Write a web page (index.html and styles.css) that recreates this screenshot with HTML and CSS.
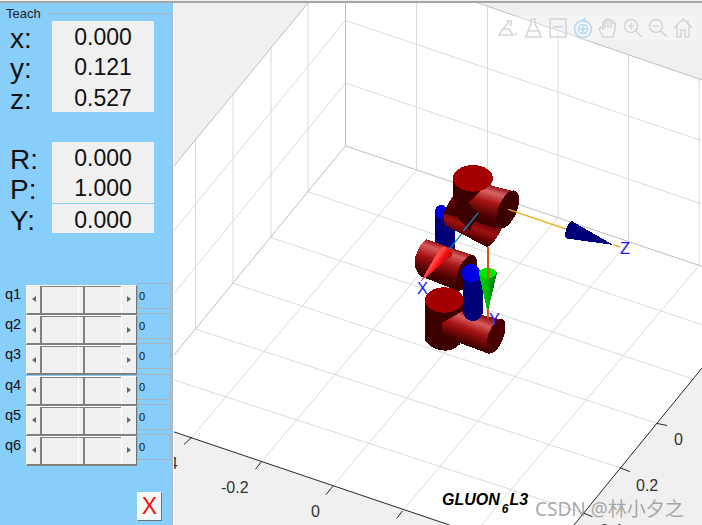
FILE: index.html
```html
<!DOCTYPE html>
<html lang="en">
<head>
<meta charset="utf-8">
<title>Teach</title>
<link rel="stylesheet" href="styles.css">
</head>
<body>
<div class="window">
  <aside class="panel">
    <fieldset class="group">
      <legend class="legend">Teach</legend>
      <div class="readouts">
        <div class="readout"><span class="axis">x:</span><span class="value">0.000</span></div>
        <div class="readout"><span class="axis">y:</span><span class="value">0.121</span></div>
        <div class="readout"><span class="axis">z:</span><span class="value">0.527</span></div>
      </div>
      <div class="readouts second">
        <div class="readout"><span class="axis">R:</span><span class="value">0.000</span></div>
        <div class="readout"><span class="axis">P:</span><span class="value">1.000</span></div>
        <div class="readout divided"><span class="axis">Y:</span><span class="value">0.000</span></div>
      </div>
      <div class="joints">
        <div class="joint"><span class="joint-name">q1</span><div class="scroll"><span class="sbtn"><i class="arrow-left"></i></span><span class="track"></span><span class="thumb"></span><span class="track"></span><span class="sbtn"><i class="arrow-right"></i></span></div><span class="joint-value">0</span></div>
        <div class="joint"><span class="joint-name">q2</span><div class="scroll"><span class="sbtn"><i class="arrow-left"></i></span><span class="track"></span><span class="thumb"></span><span class="track"></span><span class="sbtn"><i class="arrow-right"></i></span></div><span class="joint-value">0</span></div>
        <div class="joint"><span class="joint-name">q3</span><div class="scroll"><span class="sbtn"><i class="arrow-left"></i></span><span class="track"></span><span class="thumb"></span><span class="track"></span><span class="sbtn"><i class="arrow-right"></i></span></div><span class="joint-value">0</span></div>
        <div class="joint"><span class="joint-name">q4</span><div class="scroll"><span class="sbtn"><i class="arrow-left"></i></span><span class="track"></span><span class="thumb"></span><span class="track"></span><span class="sbtn"><i class="arrow-right"></i></span></div><span class="joint-value">0</span></div>
        <div class="joint"><span class="joint-name">q5</span><div class="scroll"><span class="sbtn"><i class="arrow-left"></i></span><span class="track"></span><span class="thumb"></span><span class="track"></span><span class="sbtn"><i class="arrow-right"></i></span></div><span class="joint-value">0</span></div>
        <div class="joint"><span class="joint-name">q6</span><div class="scroll"><span class="sbtn"><i class="arrow-left"></i></span><span class="track"></span><span class="thumb"></span><span class="track"></span><span class="sbtn"><i class="arrow-right"></i></span></div><span class="joint-value">0</span></div>
      </div>
      <div class="close-row"><button class="close" type="button">X</button></div>
    </fieldset>
  </aside>
  <main class="plot">
    <svg class="chart" viewBox="174 3 528 522" width="528" height="522" xmlns="http://www.w3.org/2000/svg">
      <defs>
        <linearGradient id="cylTop" gradientUnits="userSpaceOnUse" x1="306" y1="108" x2="268" y2="238">
          <stop offset="0" stop-color="#7a0000"/><stop offset=".2" stop-color="#da6464"/><stop offset=".42" stop-color="#a81414"/><stop offset=".75" stop-color="#480000"/><stop offset="1" stop-color="#300000"/>
        </linearGradient>
        <linearGradient id="cylBack" gradientUnits="userSpaceOnUse" x1="215" y1="195" x2="190" y2="270">
          <stop offset="0" stop-color="#500000"/><stop offset=".45" stop-color="#a01010"/><stop offset=".75" stop-color="#600000"/><stop offset="1" stop-color="#300000"/>
        </linearGradient>
        <linearGradient id="cylMid" gradientUnits="userSpaceOnUse" x1="92" y1="268" x2="52" y2="385">
          <stop offset="0" stop-color="#8a0808"/><stop offset=".18" stop-color="#d85c5c"/><stop offset=".42" stop-color="#a81414"/><stop offset=".75" stop-color="#500000"/><stop offset="1" stop-color="#300000"/>
        </linearGradient>
        <linearGradient id="cylLow" gradientUnits="userSpaceOnUse" x1="205" y1="480" x2="165" y2="590">
          <stop offset="0" stop-color="#8a0808"/><stop offset=".22" stop-color="#d85c5c"/><stop offset=".45" stop-color="#a81414"/><stop offset=".8" stop-color="#480000"/><stop offset="1" stop-color="#300000"/>
        </linearGradient>
        <linearGradient id="coneRed" gradientUnits="userSpaceOnUse" x1="100" y1="300" x2="150" y2="335">
          <stop offset="0" stop-color="#e01010"/><stop offset=".35" stop-color="#ff5050"/><stop offset=".6" stop-color="#f01010"/><stop offset="1" stop-color="#a00000"/>
        </linearGradient>
        <linearGradient id="coneGreen" gradientUnits="userSpaceOnUse" x1="238" y1="0" x2="290" y2="0">
          <stop offset="0" stop-color="#00d000"/><stop offset=".4" stop-color="#00c000"/><stop offset="1" stop-color="#006800"/>
        </linearGradient>
      </defs>

      <polygon class="wall-fill" points="174,3 308,3 174,166"/>
      <polygon class="wall-fill" points="478,3 702,3 702,80"/>
      <polygon class="wall-fill" points="174,432 450,525 174,525"/>
      <polygon class="wall-fill" points="702,368 574,525 702,525"/>

      <g class="grid">
        <line x1="308" y1="3" x2="308" y2="192"/>
        <line x1="271" y1="49" x2="271" y2="237"/>
        <line x1="233" y1="95" x2="233" y2="283"/>
        <line x1="195.5" y1="139" x2="195.5" y2="329"/>
        <line x1="416.5" y1="3" x2="416.5" y2="170"/>
        <line x1="487.5" y1="6" x2="487.5" y2="194"/>
        <line x1="558" y1="30" x2="558" y2="218"/>
        <line x1="628.5" y1="55" x2="628.5" y2="242"/>
        <line x1="699" y1="79" x2="699" y2="265"/>
        <line x1="345.4" y1="20.4" x2="174" y2="230.7"/>
        <line x1="345.4" y1="83.1" x2="174" y2="293.5"/>
        <line x1="345.4" y1="20.4" x2="702" y2="140.8"/>
        <line x1="345.4" y1="83.1" x2="702" y2="204"/>
        <line x1="308.1" y1="191.7" x2="702" y2="324.8"/>
        <line x1="270.8" y1="237.5" x2="694.2" y2="379.4"/>
        <line x1="232.8" y1="283.3" x2="656.9" y2="423.4"/>
        <line x1="195.4" y1="329" x2="619.6" y2="467.5"/>
        <line x1="174" y1="380" x2="584" y2="513.3"/>
        <line x1="416.7" y1="170" x2="192" y2="437"/>
        <line x1="487.6" y1="194" x2="261.6" y2="461.4"/>
        <line x1="557.9" y1="217.7" x2="332.9" y2="486.2"/>
        <line x1="628.4" y1="241.6" x2="402.4" y2="511"/>
        <line x1="699" y1="265.5" x2="473" y2="535"/>
      </g>
      <g class="edge">
        <line x1="345.5" y1="3" x2="345.5" y2="146"/>
        <line x1="345.4" y1="145.9" x2="702" y2="266.4"/>
        <line x1="345.4" y1="145.9" x2="174" y2="355"/>
        <line x1="308" y1="3" x2="174" y2="166"/>
        <line x1="478" y1="3" x2="702" y2="80"/>
      </g>
      <g class="axis-line">
        <line x1="174" y1="431.9" x2="450" y2="525.2"/>
        <line x1="702" y1="368" x2="573.8" y2="525.2"/>
        <line x1="192" y1="437" x2="184" y2="444.4"/>
        <line x1="261.6" y1="461.4" x2="255.5" y2="469.2"/>
        <line x1="332.9" y1="486.2" x2="326" y2="494.7"/>
        <line x1="402.4" y1="511" x2="396.7" y2="518.4"/>
        <line x1="656.9" y1="423.4" x2="667" y2="425.5"/>
        <line x1="619.6" y1="467.5" x2="629.8" y2="471.6"/>
        <line x1="584" y1="513.3" x2="592.5" y2="516.7"/>
      </g>
      <g class="tick">
        <text x="150" y="469">-0.4</text>
        <text x="221" y="493">-0.2</text>
        <text x="311" y="517">0</text>
        <text x="674" y="445">0</text>
        <text x="636" y="491">0.2</text>
        <text x="600" y="536">0.4</text>
      </g>

      <g transform="translate(400 150) scale(0.33333)" class="robot">
        <!-- back link -->
        <path class="navy" d="M105 185 H165 V320 H105 Z"/>
        <circle class="blue" cx="124" cy="185" r="20"/>
        <!-- mid cylinder -->
        <path fill="url(#cylMid)" d="M80 268 L225 318 L180 425 L60 378 Q35 345 48 315 Q60 280 80 268 Z"/>
        <ellipse class="dark" cx="200" cy="368" rx="26" ry="56" transform="rotate(22 200 368)"/>
        <!-- red cone -->
        <path fill="url(#coneRed)" d="M62 395 L120 293 Q150 285 158 315 Z"/>
        <!-- blue axis -->
        <line class="x-line" x1="235" y1="188" x2="148" y2="298"/>
        <!-- lower vertical -->
        <path class="dark" d="M75 450 V570 Q95 603 140 602 Q170 600 190 570 V450 Z"/>
        <ellipse class="red-cap" cx="133" cy="450" rx="58" ry="38"/>
        <!-- lower horizontal -->
        <path fill="url(#cylLow)" d="M190 482 L310 510 L268 612 L128 560 L125 520 Z"/>
        <ellipse class="end-cap" cx="288" cy="558" rx="23" ry="54" transform="rotate(20 288 558)"/>
        <!-- mid link -->
        <path class="navy" d="M190 375 H250 V490 Q235 515 215 513 Q195 510 190 490 Z"/>
        <circle class="blue" cx="213" cy="370" r="28"/>
        <!-- orange link -->
        <line class="link" x1="264" y1="290" x2="264" y2="505"/>
        <!-- green cone -->
        <path fill="url(#coneGreen)" d="M236 368 L263 488 L291 368 Z"/>
        <path class="green-cap" d="M236 368 A28 17 0 0 1 291 368 Q280 385 263 386 Q245 385 236 368 Z"/>
        <line class="link" x1="264" y1="350" x2="264" y2="386"/>
        <!-- back upper cylinder -->
        <path fill="url(#cylBack)" d="M130 190 L135 225 L262 292 Q285 280 305 235 L290 210 Z"/>
        <!-- upper horizontal -->
        <path fill="url(#cylTop)" d="M250 100 L345 125 L293 235 L130 190 L155 142 Z"/>
        <ellipse class="dark" cx="323" cy="178" rx="28" ry="60" transform="rotate(22 323 178)"/>
        <!-- top vertical -->
        <path class="dark" d="M160 85 V145 L175 205 L210 242 L235 190 L205 160 L278 85 Z"/>
        <ellipse class="red-cap" cx="219" cy="85" rx="60" ry="40"/>
        <line class="x-line" x1="235" y1="188" x2="190" y2="243"/>
        <!-- z axis -->
        <line class="z-line" x1="325" y1="178" x2="497" y2="237"/>
        <path class="navy" d="M515 213 L640 285 L497 265 Q490 235 515 213 Z"/>
        <line class="z-line" x1="640" y1="284" x2="660" y2="291"/>
      </g>

      <g class="axis-label">
        <text x="417" y="294">X</text>
        <text x="620" y="254">Z</text>
        <text x="489" y="325">Y</text>
      </g>
      <text class="title" x="442" y="505">GLUON<tspan class="title-sub" dx="2" dy="8">6</tspan><tspan dx="1" dy="-8">L3</tspan></text>
      <text class="watermark" x="535" y="516">CSDN @林小夕之</text>
    </svg>

    <div class="toolbar">
      <svg class="tool" viewBox="0 0 20 20"><path d="M1 17 H15 L11 11 H5 Z M5 11 L11 4 M8 3 H13 V8"/><path class="tool-solid" d="M16 15 L19 15 L19 18 Z"/></svg>
      <svg class="tool" viewBox="0 0 20 20"><path d="M8 1 H12 V6 L16 13 L18 19 H3 L5 13 L8 6 Z M5 13 H16"/></svg>
      <svg class="tool" viewBox="0 0 20 20"><rect x="2" y="1" width="16" height="18"/><path d="M5 9 H15"/></svg>
      <svg class="tool tool-blue" viewBox="0 0 20 20"><circle cx="10" cy="11" r="8.5"/><circle cx="10" cy="11" r="4.5"/><path d="M10 8 V14 M7 11 H13 M10 2 L13 0 M10 2 L13 4"/></svg>
      <svg class="tool" viewBox="0 0 20 20"><path d="M5 19 L1 11 L3 9 L5 11 V4 H7 V2 H9 V1 H11 V2 H13 V3 H15 V5 H17 V12 L15 19 Z M7 4 V10 M10 2 V10 M13 3 V10"/></svg>
      <svg class="tool" viewBox="0 0 20 20"><circle cx="8" cy="8" r="6.5"/><path d="M5 8 H11 M8 5 V11 M13 13 L19 19"/></svg>
      <svg class="tool" viewBox="0 0 20 20"><circle cx="8" cy="8" r="6.5"/><path d="M5 8 H11 M13 13 L19 19"/></svg>
      <svg class="tool" viewBox="0 0 20 20"><path d="M1 10 L10 1 L19 10 M4 8 V19 H8 V12 H12 V19 H16 V8 M15 2 V5"/></svg>
    </div>
  </main>
</div>
</body>
</html>
```
FILE: styles.css
```css
html, body {
  margin: 0;
  padding: 0;
  background: #f0f0f0;
}

.window {
  width: 702px;
  height: 524px;
  box-sizing: border-box;
  margin-top: 1px;
  display: flex;
  overflow: hidden;
  background: #fff;
  border-top: 2px solid #a6a6a6;
  font-family: "Liberation Sans", Arial, sans-serif;
}

.panel {
  flex: 0 0 174px;
  box-sizing: border-box;
  padding: 3px 0 0 1px;
  background: #87cefa;
  border-right: 1px solid #fff;
}

.group {
  box-sizing: border-box;
  height: 519px;
  margin: 0;
  padding: 0;
  min-width: 0;
  border: 1px solid #a9b4bc;
  border-left: 0;
  border-bottom: 0;
}

.legend {
  margin-left: 4px;
  padding: 0 7px 0 1px;
  font-size: 13px;
  line-height: 15px;
  color: #222;
}

.readouts {
  display: flex;
  flex-direction: column;
}

.second {
  margin-top: 30px;
}

.readout {
  display: flex;
  height: 30.33px;
}

.divided .value {
  border-top: 1px solid #87cefa;
}

.axis {
  flex: 0 0 51px;
  box-sizing: border-box;
  padding-left: 9px;
  font-size: 28px;
  line-height: 36px;
  color: #111;
}

.value {
  flex: 0 0 102px;
  box-sizing: border-box;
  background: #f0f0f0;
  font-size: 23px;
  line-height: 32px;
  text-align: center;
  color: #111;
}

.joints {
  display: flex;
  flex-direction: column;
  margin-top: 52px;
}

.joint {
  display: flex;
  height: 30.2px;
}

.joint-name {
  flex: 0 0 25px;
  box-sizing: border-box;
  padding-left: 4px;
  font-size: 14.5px;
  line-height: 19px;
  color: #111;
}

.scroll {
  flex: 0 0 111px;
  box-sizing: border-box;
  height: 30px;
  display: flex;
  background: #f0f0f0;
  border-left: 1px solid #fff;
  border-top: 1px solid #fff;
  border-right: 1px solid #707070;
  border-bottom: 2px solid #808080;
}

.sbtn {
  flex: 0 0 15px;
  box-sizing: border-box;
  display: flex;
  align-items: center;
  justify-content: center;
  background: #f0f0f0;
  border-right: 2px solid #808080;
}

.sbtn:last-child {
  border-right: 0;
  border-left: 1px solid #fff;
}

.track {
  flex: 1;
  box-sizing: border-box;
  background: #f0f0f0;
  border-top: 1px solid #808080;
}

.thumb {
  flex: 0 0 7px;
  box-sizing: border-box;
  background: #f0f0f0;
  border-left: 1px solid #fff;
  border-top: 1px solid #808080;
  border-right: 2px solid #808080;
}

.arrow-left,
.arrow-right {
  display: block;
  width: 0;
  height: 0;
  border-top: 3.5px solid transparent;
  border-bottom: 3.5px solid transparent;
}

.arrow-left {
  border-right: 4px solid #666;
}

.arrow-right {
  border-left: 4px solid #666;
}

.joint-value {
  flex: 0 0 34px;
  box-sizing: border-box;
  height: 26px;
  margin-top: -2px;
  padding: 5px 0 0 1px;
  border: 1px solid #a8b4bc;
  font-size: 11px;
  line-height: 14px;
  color: #111;
}

.close-row {
  display: flex;
  margin-top: 26px;
  padding-left: 136px;
}

.close {
  box-sizing: border-box;
  width: 25px;
  height: 29px;
  margin: 0;
  padding: 0;
  background: #f8f8f8;
  border: 1px solid;
  border-color: #fff #707070 #707070 #fff;
  font-family: "Liberation Sans", Arial, sans-serif;
  font-size: 23px;
  line-height: 27px;
  color: #f01010;
}

.plot {
  position: relative;
  flex: 1;
  background: #fff;
}

.chart {
  display: block;
}

.wall-fill {
  fill: #f0f0f0;
}

.grid line {
  stroke: #dadada;
  stroke-width: 1;
}

.edge line {
  stroke: #bdbdbd;
  stroke-width: 1;
}

.axis-line line {
  stroke: #262626;
  stroke-width: 1;
}

.tick text {
  font-family: "Liberation Sans", Arial, sans-serif;
  font-size: 16px;
  fill: #333;
}

.robot {
  shape-rendering: crispEdges;
}

.robot line {
  shape-rendering: auto;
}

.navy { fill: #000078; }
.blue { fill: #0000e0; }
.dark { fill: #3c0000; }
.red-cap { fill: #a30000; }
.end-cap { fill: #4a0000; }
.green-cap { fill: #00e800; }

.robot .link {
  stroke: #d95319;
  stroke-width: 6;
}

.robot .x-line {
  stroke: #0d84c4;
  stroke-width: 4;
}

.robot .z-line {
  stroke: #edb120;
  stroke-width: 4;
}

.axis-label text {
  font-family: "Liberation Sans", Arial, sans-serif;
  font-size: 16.5px;
  fill: #1a1aff;
}

.title {
  font-family: "Liberation Sans", Arial, sans-serif;
  font-size: 16px;
  font-weight: bold;
  font-style: italic;
  fill: #000;
}

.title-sub {
  font-size: 12px;
}

.watermark {
  font-family: "Noto Sans", "Noto Sans CJK SC", sans-serif;
  font-size: 19px;
  fill: #8c8c8c;
  fill-opacity: 0.75;
}

.toolbar {
  position: absolute;
  top: 13px;
  left: 323px;
  display: flex;
  gap: 5px;
  padding: 2px 3px 2px 1px;
  background: rgba(255, 255, 255, 0.35);
}

.tool {
  width: 20px;
  height: 20px;
  fill: none;
  stroke: #d6d6d6;
  stroke-width: 1.6;
}

.tool-solid {
  fill: #d6d6d6;
  stroke: none;
}

.tool-blue {
  stroke: #b4d8f4;
}
```
